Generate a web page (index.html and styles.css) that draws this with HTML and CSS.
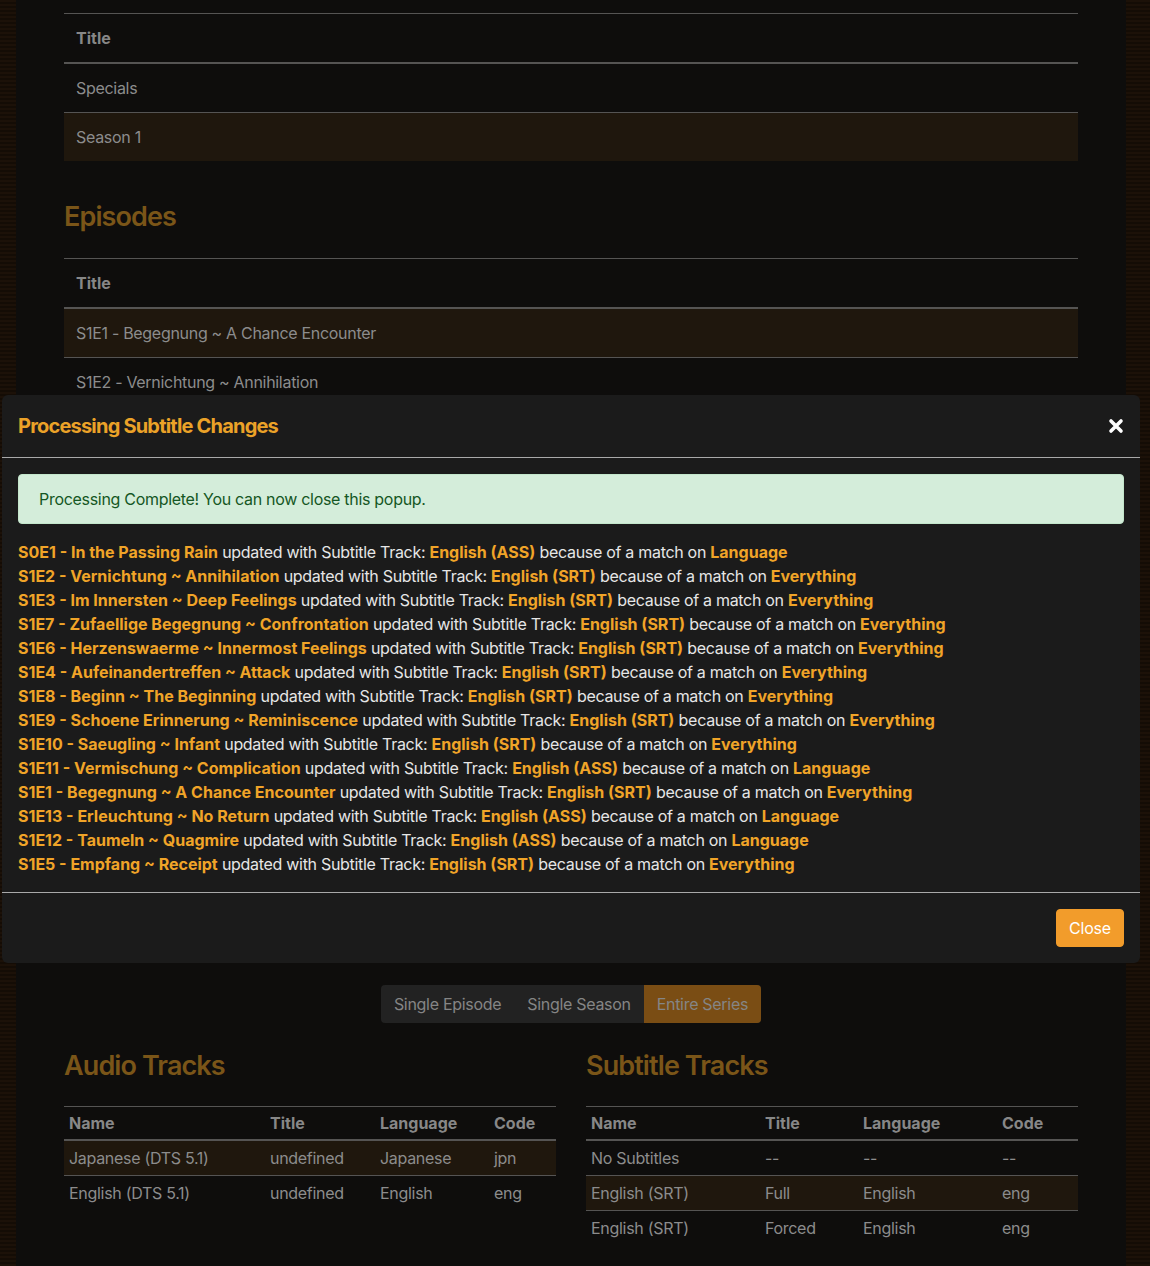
FILE: index.html
```html
<!DOCTYPE html>
<html lang="en">
<head>
<meta charset="utf-8">
<title>Subtitle Changes</title>
<link rel="stylesheet" href="styles.css">
</head>
<body>
<div class="page">
  <table class="list">
    <thead><tr><th>Title</th></tr></thead>
    <tbody>
      <tr><td>Specials</td></tr>
      <tr class="selected"><td>Season 1</td></tr>
    </tbody>
  </table>

  <h2 class="section-title episodes-title">Episodes</h2>
  <table class="list">
    <thead><tr><th>Title</th></tr></thead>
    <tbody>
      <tr class="selected"><td>S1E1 - Begegnung ~ A Chance Encounter</td></tr>
      <tr><td>S1E2 - Vernichtung ~ Annihilation</td></tr>
      <tr><td>S1E3 - Im Innersten ~ Deep Feelings</td></tr>
      <tr><td>S1E4 - Aufeinandertreffen ~ Attack</td></tr>
      <tr><td>S1E5 - Empfang ~ Receipt</td></tr>
      <tr><td>S1E6 - Herzenswaerme ~ Innermost Feelings</td></tr>
      <tr><td>S1E7 - Zufaellige Begegnung ~ Confrontation</td></tr>
      <tr><td>S1E8 - Beginn ~ The Beginning</td></tr>
      <tr><td>S1E9 - Schoene Erinnerung ~ Reminiscence</td></tr>
      <tr><td>S1E10 - Saeugling ~ Infant</td></tr>
      <tr><td>S1E11 - Vermischung ~ Complication</td></tr>
      <tr><td>S1E12 - Taumeln ~ Quagmire</td></tr>
      <tr><td>S1E13 - Erleuchtung ~ No Return</td></tr>
    </tbody>
  </table>

  <div class="scope">
    <div class="btn-group">
      <span class="scope-btn">Single Episode</span>
      <span class="scope-btn">Single Season</span>
      <span class="scope-btn active">Entire Series</span>
    </div>
  </div>

  <div class="tracks">
    <div class="track-col">
      <h2 class="section-title">Audio Tracks</h2>
      <table class="tracks-table audio">
        <thead><tr><th class="c1">Name</th><th class="c2">Title</th><th class="c3">Language</th><th class="c4">Code</th></tr></thead>
        <tbody>
          <tr class="selected"><td>Japanese (DTS 5.1)</td><td>undefined</td><td>Japanese</td><td>jpn</td></tr>
          <tr><td>English (DTS 5.1)</td><td>undefined</td><td>English</td><td>eng</td></tr>
        </tbody>
      </table>
    </div>
    <div class="track-col">
      <h2 class="section-title">Subtitle Tracks</h2>
      <table class="tracks-table subs">
        <thead><tr><th class="c1">Name</th><th class="c2">Title</th><th class="c3">Language</th><th class="c4">Code</th></tr></thead>
        <tbody>
          <tr><td>No Subtitles</td><td>--</td><td>--</td><td>--</td></tr>
          <tr class="selected"><td>English (SRT)</td><td>Full</td><td>English</td><td>eng</td></tr>
          <tr><td>English (SRT)</td><td>Forced</td><td>English</td><td>eng</td></tr>
        </tbody>
      </table>
    </div>
  </div>
</div>

<div class="modal" role="dialog">
  <div class="modal-header">
    <h3 class="modal-title">Processing Subtitle Changes</h3>
    <span class="modal-close" aria-label="Close">
      <svg width="16" height="16" viewBox="0 0 16 16"><path d="M3 3 L13 13 M13 3 L3 13" stroke="#ffffff" stroke-width="3.6" stroke-linecap="round" fill="none"/></svg>
    </span>
  </div>
  <div class="modal-body">
    <div class="alert">Processing Complete! You can now close this popup.</div>
    <div class="log">
      <div><b>S0E1 - In the Passing Rain</b> updated with Subtitle Track: <b>English (ASS)</b> because of a match on <b>Language</b></div>
      <div><b>S1E2 - Vernichtung ~ Annihilation</b> updated with Subtitle Track: <b>English (SRT)</b> because of a match on <b>Everything</b></div>
      <div><b>S1E3 - Im Innersten ~ Deep Feelings</b> updated with Subtitle Track: <b>English (SRT)</b> because of a match on <b>Everything</b></div>
      <div><b>S1E7 - Zufaellige Begegnung ~ Confrontation</b> updated with Subtitle Track: <b>English (SRT)</b> because of a match on <b>Everything</b></div>
      <div><b>S1E6 - Herzenswaerme ~ Innermost Feelings</b> updated with Subtitle Track: <b>English (SRT)</b> because of a match on <b>Everything</b></div>
      <div><b>S1E4 - Aufeinandertreffen ~ Attack</b> updated with Subtitle Track: <b>English (SRT)</b> because of a match on <b>Everything</b></div>
      <div><b>S1E8 - Beginn ~ The Beginning</b> updated with Subtitle Track: <b>English (SRT)</b> because of a match on <b>Everything</b></div>
      <div><b>S1E9 - Schoene Erinnerung ~ Reminiscence</b> updated with Subtitle Track: <b>English (SRT)</b> because of a match on <b>Everything</b></div>
      <div><b>S1E10 - Saeugling ~ Infant</b> updated with Subtitle Track: <b>English (SRT)</b> because of a match on <b>Everything</b></div>
      <div><b>S1E11 - Vermischung ~ Complication</b> updated with Subtitle Track: <b>English (ASS)</b> because of a match on <b>Language</b></div>
      <div><b>S1E1 - Begegnung ~ A Chance Encounter</b> updated with Subtitle Track: <b>English (SRT)</b> because of a match on <b>Everything</b></div>
      <div><b>S1E13 - Erleuchtung ~ No Return</b> updated with Subtitle Track: <b>English (ASS)</b> because of a match on <b>Language</b></div>
      <div><b>S1E12 - Taumeln ~ Quagmire</b> updated with Subtitle Track: <b>English (ASS)</b> because of a match on <b>Language</b></div>
      <div><b>S1E5 - Empfang ~ Receipt</b> updated with Subtitle Track: <b>English (SRT)</b> because of a match on <b>Everything</b></div>
    </div>
  </div>
  <div class="modal-footer">
    <button class="btn-close" type="button">Close</button>
  </div>
</div>
</body>
</html>
```

FILE: styles.css
```css
* { box-sizing: border-box; }

html, body {
  margin: 0;
  padding: 0;
}

body {
  font-family: Inter, "Noto Sans", "Liberation Sans", sans-serif;
  font-size: 16px;
  line-height: 24px;
  letter-spacing: -0.3px;
  color: #8c8c8c;
  background: repeating-linear-gradient(to bottom, #1c1108 0, #1c1108 2px, #140c05 2px, #140c05 4px);
  min-height: 1266px;
  overflow: hidden;
}

.page {
  margin: 0 24px 0 16px;
  background: #0e0d0c;
  padding: 13px 48px 40px;
  min-height: 1266px;
}

table {
  width: 100%;
  border-collapse: collapse;
}

th { letter-spacing: 0; }

.list th,
.list td {
  text-align: left;
  padding: 12px;
  border-top: 1px solid #555453;
}

.list th {
  font-weight: 700;
  color: #878787;
  border-bottom: 2px solid #555453;
}

.list td { color: #8c8c8c; }

tr.selected td { background: #1f170d; }

.section-title {
  font-size: 27px;
  line-height: 34px;
  font-weight: 600;
  letter-spacing: -0.9px;
  color: #7a5518;
  margin: 0 0 24px;
}

.episodes-title { margin-top: 39px; }

.scope {
  display: flex;
  justify-content: center;
  margin-top: 40px;
}

.btn-group {
  display: flex;
  background: #222222;
  border-radius: 4px;
  overflow: hidden;
}

.scope-btn {
  padding: 7px 13px;
  color: #858585;
}

.scope-btn.active { background: #7a4d14; }

.tracks {
  display: grid;
  grid-template-columns: 1fr 1fr;
  column-gap: 30px;
  margin-top: 26px;
}

.tracks .section-title { margin-bottom: 23px; }

.tracks-table th,
.tracks-table td {
  text-align: left;
  padding: 5px;
  border-top: 1px solid #555453;
  white-space: nowrap;
}

.tracks-table th {
  padding: 4px 5px;
  font-weight: 700;
  color: #878787;
  border-bottom: 2px solid #555453;
}

.audio .c1 { width: 201px; }
.audio .c2 { width: 110px; }
.audio .c3 { width: 114px; }

.subs .c1 { width: 174px; }
.subs .c2 { width: 98px; }
.subs .c3 { width: 139px; }

/* modal */
.modal {
  position: absolute;
  top: 395px;
  left: 2px;
  width: 1138px;
  background: #1b1b1b;
  border-radius: 6px;
  color: #e6e6e6;
}

.modal-header {
  display: flex;
  align-items: center;
  justify-content: space-between;
  padding: 16px;
  border-bottom: 1px solid #a9a9a9;
}

.modal-title {
  margin: 0;
  font-size: 20px;
  line-height: 30px;
  font-weight: 700;
  letter-spacing: -0.8px;
  color: #eba228;
}

.modal-close {
  display: flex;
  width: 16px;
  height: 16px;
}

.modal-body {
  padding: 16px;
}

.alert {
  background: #d4edda;
  border: 1px solid #c3e6cb;
  border-radius: 4px;
  color: #155724;
  padding: 12px 20px;
  margin-bottom: 16px;
}

.log b {
  font-weight: 700;
  letter-spacing: 0;
  color: #f0a428;
}

.log div { white-space: nowrap; }

.modal-footer {
  display: flex;
  justify-content: flex-end;
  padding: 16px;
  border-top: 1px solid #a9a9a9;
}

.btn-close {
  font-family: inherit;
  font-size: 16px;
  line-height: 24px;
  letter-spacing: -0.2px;
  padding: 6px 12px;
  background: #f29c2b;
  border: 1px solid #f29c2b;
  color: #ffffff;
  border-radius: 4px;
}
```
